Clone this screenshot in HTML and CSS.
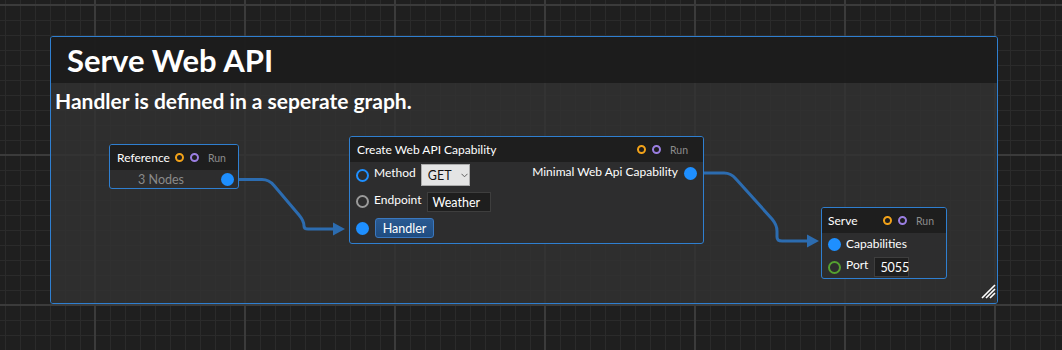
FILE: index.html
```html
<!DOCTYPE html>
<html>
<head>
<meta charset="utf-8">
<link rel="stylesheet" href="styles.css">
</head>
<body>
<div class="canvas">
  <div class="group">
    <div class="group-header"><span class="group-title">Serve Web API</span></div>
    <div class="group-body"><p class="group-desc">Handler is defined in a seperate graph.</p></div>
    <svg class="grip" width="15" height="15" viewBox="0 0 15 15">
      <path d="M1 14 L14 1 M5 14 L14 5 M9 14 L14 9" stroke="#ffffff" stroke-width="1.6"/>
    </svg>
  </div>

  <svg class="wires" width="1062" height="350" viewBox="0 0 1062 350">
    <path d="M236 179.5 L262 179.5 Q269 179.5 274 185.5 L299 215 Q304 221 304 226 Q304 229 308 229 L334 229" fill="none" stroke="#2c6cb0" stroke-width="3"/>
    <polygon points="333,222.5 345,229 333,235.5" fill="#2c6cb0"/>
    <path d="M698 173 L724 173 Q731 173 736 179 L772 219 Q777 225 777 231 L777 237 Q777 241 782 241 L808 241" fill="none" stroke="#2c6cb0" stroke-width="3"/>
    <polygon points="807,234.5 819,241 807,247.5" fill="#2c6cb0"/>
  </svg>

  <div class="node node-ref">
    <div class="node-header">
      <span class="node-title">Reference</span>
      <span class="ring ring-orange"></span>
      <span class="ring ring-purple"></span>
      <span class="run">Run</span>
    </div>
    <div class="ref-body">
      <span class="ref-count">3 Nodes</span>
      <span class="port port-filled"></span>
    </div>
  </div>

  <div class="node node-create">
    <div class="node-header">
      <span class="node-title">Create Web API Capability</span>
      <span class="spacer"></span>
      <span class="ring ring-orange"></span>
      <span class="ring ring-purple"></span>
      <span class="run">Run</span>
    </div>
    <div class="create-body">
      <div class="inputs">
        <div class="row">
          <span class="port port-blue"></span>
          <span class="label">Method</span>
          <span class="combo">GET<svg class="chev" width="7" height="5" viewBox="0 0 7 5"><path d="M0.5 0.8 L3.5 3.8 L6.5 0.8" fill="none" stroke="#606060" stroke-width="1"/></svg></span>
        </div>
        <div class="row">
          <span class="port port-grey"></span>
          <span class="label">Endpoint</span>
          <span class="textbox tb-endpoint">Weather</span>
        </div>
        <div class="row">
          <span class="port port-filled"></span>
          <span class="btn">Handler</span>
        </div>
      </div>
      <div class="outputs">
        <div class="row">
          <span class="label">Minimal Web Api Capability</span>
          <span class="port port-filled"></span>
        </div>
      </div>
    </div>
  </div>

  <div class="node node-serve">
    <div class="node-header">
      <span class="node-title">Serve</span>
      <span class="spacer"></span>
      <span class="ring ring-orange"></span>
      <span class="ring ring-purple"></span>
      <span class="run">Run</span>
    </div>
    <div class="serve-body">
      <div class="row">
        <span class="port port-filled"></span>
        <span class="label">Capabilities</span>
      </div>
      <div class="row">
        <span class="port port-green"></span>
        <span class="label">Port</span>
        <span class="textbox tb-port">5055</span>
      </div>
    </div>
  </div>
</div>
</body>
</html>
```

FILE: styles.css
```css
* { box-sizing: border-box; }
html, body { margin: 0; padding: 0; }
body {
  width: 1062px;
  height: 350px;
  overflow: hidden;
  font-family: "Segoe UI", Lato, "Open Sans", sans-serif;
  color: #ffffff;
}
.canvas {
  position: relative;
  width: 1062px;
  height: 350px;
  background-color: #1f1f1f;
  background-image:
    linear-gradient(to right, #3b3b3b 2px, transparent 2px),
    linear-gradient(to bottom, #3b3b3b 2px, transparent 2px),
    linear-gradient(to right, #2b2b2b 1px, transparent 1px),
    linear-gradient(to bottom, #2b2b2b 1px, transparent 1px);
  background-size: 150px 150px, 150px 150px, 15px 15px, 15px 15px;
  background-position: 94px 0, 0 4px, 5px 0, 0 5px;
}

/* group */
.group {
  position: absolute;
  left: 50px;
  top: 36px;
  width: 948px;
  height: 268px;
  border: 1px solid #2f7fd0;
  border-radius: 3px;
  display: flex;
  flex-direction: column;
  overflow: hidden;
}
.group-header {
  height: 46px;
  background: rgba(28, 28, 28, 0.96);
  display: flex;
  align-items: center;
  padding-left: 16px;
  flex: none;
}
.group-title {
  font-size: 31px;
  font-weight: 700;
  margin-top: -1px;
}
.group-body {
  flex: 1;
  background: rgba(50, 50, 50, 0.82);
  padding: 5px 4px;
}
.group-desc {
  margin: 0;
  font-size: 21px;
  font-weight: 700;
  line-height: 26px;
}
.grip {
  position: absolute;
  right: 1px;
  bottom: 4px;
}

/* wires */
.wires {
  position: absolute;
  left: 0;
  top: 0;
}

/* nodes */
.node {
  position: absolute;
  border: 1px solid #2f7fd0;
  border-radius: 3px;
  background: #2d2d2e;
  font-size: 12px;
  overflow: hidden;
}
.node-header {
  height: 25px;
  background: #1e1e1e;
  display: flex;
  align-items: center;
  padding: 0 6px;
}
.node-title { margin-right: 7px; }
.spacer { flex: 1; }
.ring {
  width: 9px;
  height: 9px;
  border-radius: 50%;
  border: 2px solid;
  margin-right: 6px;
  flex: none;
}
.ring-orange { border-color: #f2a219; }
.ring-purple { border-color: #9a7ee0; }
.run {
  color: #8c8c8c;
  font-size: 10.5px;
  margin-left: 3px;
  margin-right: 8px;
}

.node-ref { left: 109px; top: 144px; width: 130px; height: 45px; }
.node-ref .node-header { padding-left: 7px; }
.node-ref .node-title { margin-right: 5px; }
.ref-body {
  height: 18px;
  display: flex;
  align-items: center;
  justify-content: flex-end;
  padding-right: 4px;
}
.ref-count {
  color: #8a8a8a;
  font-size: 12.5px;
  margin-right: 37px;
}

.port {
  width: 13px;
  height: 13px;
  border-radius: 50%;
  flex: none;
}
.port-filled { background: #1e8fff; }
.port-blue { border: 2px solid #1e8fff; }
.port-grey { border: 2px solid #9a9a9a; }
.port-green { border: 2px solid #55a030; }

.row {
  display: flex;
  align-items: center;
}
.label { line-height: 16px; }

.node-create { left: 349px; top: 136px; width: 355px; height: 108px; }
.node-create .node-header { padding-left: 7px; }
.node-create .run { margin-right: 9px; }
.create-body {
  display: flex;
  justify-content: space-between;
  padding: 2px 6px 0 6px;
}
.inputs { display: flex; flex-direction: column; gap: 5px; }
.inputs .row { height: 22px; }
.inputs .row:nth-child(2) { height: 21px; }
.inputs .port { margin-right: 5px; }
.inputs .label { margin-right: 5px; margin-top: -4px; }
.outputs { margin-top: -2px; }
.outputs .row { height: 22px; }
.outputs .label { margin-right: 6px; margin-top: -2px; }

.combo {
  width: 49px;
  height: 22px;
  background: #e4e4e4;
  border: 1px solid #acacac;
  color: #111;
  display: flex;
  align-items: center;
  padding-left: 6px;
  gap: 9px;
  font-size: 12.5px;
}
.textbox {
  height: 20px;
  background: #1e1e1e;
  border: 1px solid #3e3e3e;
  display: flex;
  align-items: center;
  padding-left: 5px;
  font-size: 12.5px;
}
.tb-endpoint { width: 64px; margin-top: 1px; }
.btn {
  height: 20px;
  width: 59px;
  background: linear-gradient(#2a5a92, #1f4c80);
  border: 1px solid #3a78bf;
  border-radius: 3px;
  display: flex;
  align-items: center;
  justify-content: center;
  font-size: 12.5px;
  margin-left: 1px;
}

.node-serve { left: 821px; top: 207px; width: 126px; height: 72px; }
.node-serve .run { margin-right: 6px; }
.serve-body {
  display: flex;
  flex-direction: column;
  padding: 1px 6px 0 6px;
  gap: 3px;
}
.serve-body .row { height: 20px; }
.serve-body .port { margin-right: 5px; }
.serve-body .label { margin-right: 6px; }
.serve-body .row:nth-child(2) .label { margin-top: -4px; }
.tb-port { width: 35px; height: 20px; }
```
